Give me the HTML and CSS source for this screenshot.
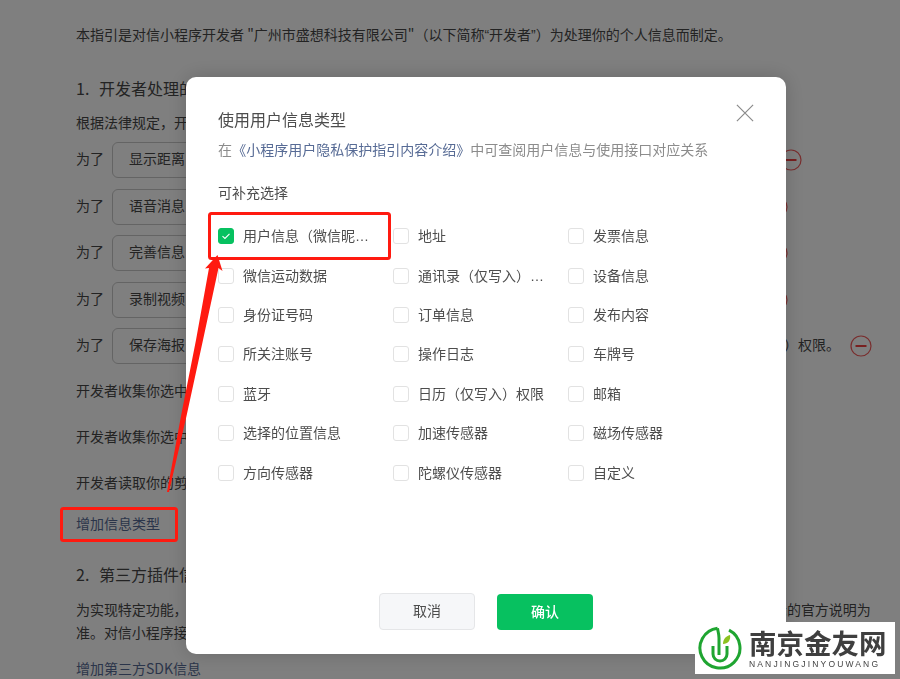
FILE: index.html
```html
<!DOCTYPE html>
<html lang="zh-CN">
<head>
<meta charset="utf-8">
<title>用户隐私保护指引</title>
<link rel="stylesheet" href="styles.css">
</head>
<body>
<main class="page">
  <p class="intro">本指引是对信小程序开发者 "广州市盛想科技有限公司"（以下简称<span class="quote">“</span>开发者<span class="quote">”</span>）为处理你的个人信息而制定。</p>
  <h2 class="heading heading-first"><span class="heading-num">1.</span>开发者处理的信息</h2>
  <p class="lead">根据法律规定，开发者仅处理实现小程序功能所必要的信息。</p>
  <div class="rows">
    <div class="row row-first"><span class="row-label">为了</span><span class="pill">显示距离</span><span class="row-end"><svg class="minus" viewBox="0 0 22 22"><circle cx="11" cy="11" r="10"/><path d="M5.5 11h11"/></svg></span></div>
    <div class="row row-mid"><span class="row-label">为了</span><span class="pill">语音消息</span><span class="row-end"><svg class="minus" viewBox="0 0 22 22"><circle cx="11" cy="11" r="10"/><path d="M5.5 11h11"/></svg></span></div>
    <div class="row row-mid"><span class="row-label">为了</span><span class="pill">完善信息</span><span class="row-end"><svg class="minus" viewBox="0 0 22 22"><circle cx="11" cy="11" r="10"/><path d="M5.5 11h11"/></svg></span></div>
    <div class="row row-mid"><span class="row-label">为了</span><span class="pill">录制视频</span><span class="row-end"><svg class="minus" viewBox="0 0 22 22"><circle cx="11" cy="11" r="10"/><path d="M5.5 11h11"/></svg></span></div>
    <div class="row row-long"><span class="row-label">为了</span><span class="pill">保存海报</span><span class="row-end"><span class="row-label">）权限。</span><svg class="minus" viewBox="0 0 22 22"><circle cx="11" cy="11" r="10"/><path d="M5.5 11h11"/></svg></span></div>
  </div>
  <p class="note note-first">开发者收集你选中的照片或视频信息</p>
  <p class="note">开发者收集你选中的文件信息</p>
  <p class="note">开发者读取你的剪切板</p>
  <a class="link link-add">增加信息类型</a>
  <h2 class="heading heading-second"><span class="heading-num">2.</span>第三方插件信息</h2>
  <p class="plugin">为实现特定功能，开发者可能会接入由第三方提供的插件。第三方插件的个人信息处理规则，具体请以该第三方公示的官方说明为准。对信小程序接入的第三方插件信息如下。</p>
  <a class="link link-sdk">增加第三方SDK信息</a>
</main>

<div class="mask"></div>

<section class="dialog">
  <button class="close" aria-label="关闭"><svg viewBox="0 0 20 20"><path d="M1 1l18 18M19 1L1 19"/></svg></button>
  <h3 class="dialog-title">使用用户信息类型</h3>
  <p class="dialog-sub">在 <a class="dialog-link">《小程序用户隐私保护指引内容介绍》</a> 中可查阅用户信息与使用接口对应关系</p>
  <h4 class="dialog-section">可补充选择</h4>
  <div class="options">
    <label class="option"><span class="box box-on"><svg viewBox="0 0 16 16"><path d="M4 8.2l2.8 2.6L12 5.6"/></svg></span><span class="option-text">用户信息（微信昵称、头像）</span></label>
    <label class="option"><span class="box"></span><span class="option-text">地址</span></label>
    <label class="option"><span class="box"></span><span class="option-text">发票信息</span></label>
    <label class="option"><span class="box"></span><span class="option-text">微信运动数据</span></label>
    <label class="option"><span class="box"></span><span class="option-text">通讯录（仅写入）权限</span></label>
    <label class="option"><span class="box"></span><span class="option-text">设备信息</span></label>
    <label class="option"><span class="box"></span><span class="option-text">身份证号码</span></label>
    <label class="option"><span class="box"></span><span class="option-text">订单信息</span></label>
    <label class="option"><span class="box"></span><span class="option-text">发布内容</span></label>
    <label class="option"><span class="box"></span><span class="option-text">所关注账号</span></label>
    <label class="option"><span class="box"></span><span class="option-text">操作日志</span></label>
    <label class="option"><span class="box"></span><span class="option-text">车牌号</span></label>
    <label class="option"><span class="box"></span><span class="option-text">蓝牙</span></label>
    <label class="option"><span class="box"></span><span class="option-text">日历（仅写入）权限</span></label>
    <label class="option"><span class="box"></span><span class="option-text">邮箱</span></label>
    <label class="option"><span class="box"></span><span class="option-text">选择的位置信息</span></label>
    <label class="option"><span class="box"></span><span class="option-text">加速传感器</span></label>
    <label class="option"><span class="box"></span><span class="option-text">磁场传感器</span></label>
    <label class="option"><span class="box"></span><span class="option-text">方向传感器</span></label>
    <label class="option"><span class="box"></span><span class="option-text">陀螺仪传感器</span></label>
    <label class="option"><span class="box"></span><span class="option-text">自定义</span></label>
  </div>
  <div class="actions">
    <button class="btn btn-cancel">取消</button>
    <button class="btn btn-ok">确认</button>
  </div>
</section>

<svg class="markup" viewBox="0 0 900 679">
  <rect class="markup-box" x="209.5" y="213.5" width="180" height="45" rx="2"/>
  <rect class="markup-box" x="61.5" y="508.5" width="115" height="32" rx="2"/>
  <path class="markup-arrow" d="M217.5 255L222.5 271L218.5 268L203 340L186.5 416L169 492L167 492L181 416L196 340L209 268L205 268.5Z"/>
</svg>

<aside class="brand">
  <svg class="brand-icon" viewBox="0 0 44 44">
    <path class="brand-ring" d="M19.5 2.2A20 20 0 1 0 31 4.2"/>
    <path class="brand-stem" d="M19.5 2.2C20 6 21 8 21 12V29"/>
    <path class="brand-stem" d="M15 20V28A7 7 0 0 0 29 28V20"/>
    <path class="brand-leaf" d="M25 18C25 13 28 10 32 9C33 14 30 18 25 18Z"/>
  </svg>
  <div class="brand-text">
    <div class="brand-name">南京金友网</div>
    <div class="brand-sub">NANJINGJINYOUWANG</div>
  </div>
</aside>
</body>
</html>
```
FILE: styles.css
```css
* { box-sizing: border-box; }

html, body {
  margin: 0;
  height: 100%;
  overflow: hidden;
}

body {
  background: #fff;
  color: #474747;
  font-family: "Noto Sans CJK SC", "Liberation Sans", sans-serif;
  font-size: 14px;
  line-height: 22px;
}

p, h2, h3, h4 { margin: 0; font-weight: 400; }

.page {
  padding: 23px 0 0 76px;
}

.quote { font-family: "Liberation Sans", sans-serif; }

.heading {
  font-size: 16px;
  line-height: 24px;
}
.heading-num { display: inline-block; width: 23px; }
.heading-first { margin-top: 30px; }
.heading-second { margin-top: 28px; }

.lead { margin-top: 11px; }

.rows {
  display: flex;
  flex-direction: column;
  gap: 10.5px;
  margin-top: 9px;
}

.row {
  display: flex;
  align-items: center;
  height: 36px;
}
.row-first { width: 726px; }
.row-mid { width: 711.5px; }
.row-long { width: 796px; }

.row-label { padding-bottom: 4px; }

.pill {
  display: flex;
  align-items: center;
  margin-left: 8px;
  width: 300px;
  height: 36px;
  padding: 0 0 4px 16px;
  border: 1px solid #c9c9c9;
  border-radius: 6px;
}

.row-end {
  display: flex;
  align-items: center;
  gap: 10px;
  margin-left: auto;
}

.minus { width: 22px; height: 22px; display: block; }
.minus circle { fill: none; stroke: #f25c5c; stroke-width: 1.2; }
.minus path { fill: none; stroke: #f04040; stroke-width: 2; }

.note { margin-top: 24px; }
.note-first { margin-top: 15px; }

.link { display: block; color: #576b95; }
.link-add { margin-top: 19px; }
.link-sdk { margin-top: 13px; }

.plugin {
  margin-top: 12px;
  width: 805px;
  line-height: 23px;
  letter-spacing: -.06px;
}

.mask {
  position: fixed;
  inset: 0;
  background: rgba(0, 0, 0, .5);
}

.dialog {
  position: fixed;
  left: 186px;
  top: 77px;
  width: 600px;
  height: 577px;
  display: flex;
  flex-direction: column;
  padding: 31px 32px 24px;
  background: #fff;
  border-radius: 10px;
  box-shadow: 0 0 20px rgba(0, 0, 0, .18);
}

.close {
  position: absolute;
  top: 27px;
  right: 32px;
  width: 18px;
  height: 18px;
  padding: 0;
  border: 0;
  background: none;
}
.close svg { display: block; width: 18px; height: 18px; }
.close path { fill: none; stroke: #8a8a8a; stroke-width: 1.3; }

.dialog-title {
  font-size: 16px;
  line-height: 22px;
  color: #4d4d4d;
}

.dialog-sub {
  margin-top: 7.5px;
  color: #8c8c8c;
  white-space: nowrap;
}
.dialog-link { color: #576b95; margin: 0 -3px; }

.dialog-section {
  margin-top: 21.5px;
  color: #4d4d4d;
}

.options {
  display: grid;
  grid-template-columns: repeat(3, 175px);
  grid-auto-rows: 39.4px;
  margin-top: 13.5px;
}

.option {
  display: flex;
  align-items: center;
  gap: 9px;
  color: #4d4d4d;
}

.box {
  flex: none;
  width: 16px;
  height: 16px;
  border: 1px solid #e2e2e2;
  border-radius: 3px;
  background: #fff;
}
.box-on { border-color: #07c160; background: #07c160; }
.box-on svg { display: block; width: 14px; height: 14px; }
.box-on path { fill: none; stroke: #fff; stroke-width: 1.3; }

.option-text {
  max-width: 126px;
  overflow: hidden;
  white-space: nowrap;
  text-overflow: ellipsis;
  font-family: "Liberation Sans", "Noto Sans CJK SC", sans-serif;
}

.actions {
  display: flex;
  justify-content: center;
  gap: 22px;
  margin-top: auto;
}

.btn {
  width: 96px;
  height: 36px;
  padding: 0 0 3px;
  border: 1px solid transparent;
  border-radius: 4px;
  font: inherit;
}
.btn-cancel {
  height: 37px;
  margin-top: -1px;
  background: #f6f7f9;
  border-color: #e5e6e8;
  color: #4d4d4d;
}
.btn-ok {
  background: #07c160;
  color: #fff;
  font-weight: 500;
}

.markup {
  position: fixed;
  inset: 0;
  width: 900px;
  height: 679px;
  pointer-events: none;
}
.markup-box {
  fill: none;
  stroke: #ff1a10;
  stroke-width: 3;
}
.markup-arrow { fill: #ff1a10; }

.brand {
  position: fixed;
  left: 695px;
  top: 622px;
  width: 200px;
  height: 52px;
  display: flex;
  align-items: center;
  gap: 7px;
  padding-left: 3px;
  background: #fff;
}
.brand-icon { flex: none; width: 44px; height: 44px; }
.brand-ring, .brand-stem {
  fill: none;
  stroke: #1fa531;
  stroke-width: 3;
}
.brand-leaf { fill: #8cc21f; }

.brand-name {
  font-size: 27.5px;
  line-height: 32px;
  font-weight: 700;
  color: #3f3f3f;
  white-space: nowrap;
}
.brand-sub {
  font-family: "Liberation Sans", sans-serif;
  font-size: 8.5px;
  line-height: 12px;
  letter-spacing: 2.15px;
  color: #444;
  white-space: nowrap;
}
```
